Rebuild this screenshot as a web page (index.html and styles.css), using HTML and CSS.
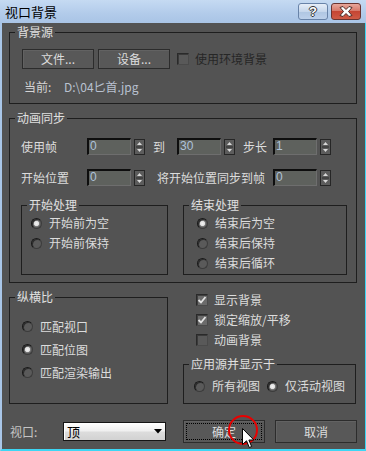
FILE: index.html
```html
<!DOCTYPE html>
<html lang="zh-CN">
<head>
<meta charset="utf-8">
<title>视口背景</title>
<link rel="stylesheet" href="styles.css">
</head>
<body>
<div class="window">
  <div class="titlebar">
    <span class="title">视口背景</span>
    <div class="caption-btns">
      <span class="cap-btn help">?</span>
      <span class="cap-btn close">
        <svg width="14" height="11" viewBox="0 0 14 11"><path d="M1 1.5 L4 0.5 L7 3.5 L10 0.5 L13 1.5 L9.5 5.5 L13 9.5 L10 10.5 L7 7.5 L4 10.5 L1 9.5 L4.5 5.5 Z" fill="#fff" stroke="#4a2a26" stroke-width="1" stroke-linejoin="round"/></svg>
      </span>
    </div>
  </div>
  <div class="frame">
    <div class="client">
      <fieldset class="group g-source">
        <legend>背景源</legend>
        <div class="gbody source-body">
          <div class="src-row">
            <button class="btn src-btn">文件...</button>
            <button class="btn src-btn">设备...</button>
            <span class="check disabled"><span class="box"></span><span>使用环境背景</span></span>
          </div>
          <div class="current-row"><span class="cur-label">当前:</span><span class="cur-path">D:\04匕首.jpg</span></div>
        </div>
      </fieldset>

      <fieldset class="group g-anim">
        <legend>动画同步</legend>
        <div class="gbody anim-body">
          <div class="frow">
            <span class="flabel">使用帧</span>
            <span class="spinner"><span class="field">0</span><span class="arrows"><svg width="11" height="16" viewBox="0 0 11 16"><path d="M5.5 3 L8 6 L3 6 Z" fill="#d8d8d8"/><line x1="2" y1="8" x2="9" y2="8" stroke="#2a2a2a"/><path d="M3 10 L8 10 L5.5 13 Z" fill="#d8d8d8"/></svg></span></span>
            <span class="mid-label to">到</span>
            <span class="spinner"><span class="field">30</span><span class="arrows"><svg width="11" height="16" viewBox="0 0 11 16"><path d="M5.5 3 L8 6 L3 6 Z" fill="#d8d8d8"/><line x1="2" y1="8" x2="9" y2="8" stroke="#2a2a2a"/><path d="M3 10 L8 10 L5.5 13 Z" fill="#d8d8d8"/></svg></span></span>
            <span class="mid-label step">步长</span>
            <span class="spinner"><span class="field">1</span><span class="arrows"><svg width="11" height="16" viewBox="0 0 11 16"><path d="M5.5 3 L8 6 L3 6 Z" fill="#d8d8d8"/><line x1="2" y1="8" x2="9" y2="8" stroke="#2a2a2a"/><path d="M3 10 L8 10 L5.5 13 Z" fill="#d8d8d8"/></svg></span></span>
          </div>
          <div class="frow second">
            <span class="flabel">开始位置</span>
            <span class="spinner"><span class="field">0</span><span class="arrows"><svg width="11" height="16" viewBox="0 0 11 16"><path d="M5.5 3 L8 6 L3 6 Z" fill="#d8d8d8"/><line x1="2" y1="8" x2="9" y2="8" stroke="#2a2a2a"/><path d="M3 10 L8 10 L5.5 13 Z" fill="#d8d8d8"/></svg></span></span>
            <span class="mid-label sync">将开始位置同步到帧</span>
            <span class="spinner"><span class="field">0</span><span class="arrows"><svg width="11" height="16" viewBox="0 0 11 16"><path d="M5.5 3 L8 6 L3 6 Z" fill="#d8d8d8"/><line x1="2" y1="8" x2="9" y2="8" stroke="#2a2a2a"/><path d="M3 10 L8 10 L5.5 13 Z" fill="#d8d8d8"/></svg></span></span>
          </div>
          <div class="subgroups">
            <fieldset class="group sub-start">
              <legend>开始处理</legend>
              <div class="gbody sub-body left">
                <span class="radio-row"><span class="radio on"></span>开始前为空</span>
                <span class="radio-row"><span class="radio"></span>开始前保持</span>
              </div>
            </fieldset>
            <fieldset class="group sub-end">
              <legend>结束处理</legend>
              <div class="gbody sub-body right">
                <span class="radio-row"><span class="radio on"></span>结束后为空</span>
                <span class="radio-row"><span class="radio"></span>结束后保持</span>
                <span class="radio-row"><span class="radio"></span>结束后循环</span>
              </div>
            </fieldset>
          </div>
        </div>
      </fieldset>

      <div class="lower">
        <fieldset class="group g-aspect">
          <legend>纵横比</legend>
          <div class="gbody aspect-body">
            <span class="radio-row tall"><span class="radio"></span>匹配视口</span>
            <span class="radio-row tall"><span class="radio on"></span>匹配位图</span>
            <span class="radio-row tall"><span class="radio"></span>匹配渲染输出</span>
          </div>
        </fieldset>
        <div class="right-col">
          <span class="check-row"><span class="box checked"><svg width="10" height="10" viewBox="0 0 10 10"><path d="M1.5 5 L4 7.5 L8.5 2" fill="none" stroke="#e4e4e4" stroke-width="1.8"/></svg></span>显示背景</span>
          <span class="check-row"><span class="box checked"><svg width="10" height="10" viewBox="0 0 10 10"><path d="M1.5 5 L4 7.5 L8.5 2" fill="none" stroke="#e4e4e4" stroke-width="1.8"/></svg></span>锁定缩放/平移</span>
          <span class="check-row"><span class="box"></span>动画背景</span>
          <fieldset class="group g-apply">
            <legend>应用源并显示于</legend>
            <div class="gbody apply-body">
              <span class="radio-row"><span class="radio"></span>所有视图</span>
              <span class="radio-row"><span class="radio on"></span>仅活动视图</span>
            </div>
          </fieldset>
        </div>
      </div>

      <div class="bottom-row">
        <span class="vp-label">视口:</span>
        <span class="dropdown"><span class="dd-text">顶</span><svg width="8" height="5" viewBox="0 0 8 5"><path d="M0 0 L8 0 L4 4.5 Z" fill="#000"/></svg></span>
        <button class="btn action ok"><span class="focus">确定</span></button>
        <button class="btn action cancel">取消</button>
      </div>
    </div>
  </div>
  <span class="click-ring"></span>
  <svg class="cursor" width="13" height="21" viewBox="0 0 13 21"><path d="M0.5 0.5 L0.5 16.5 L4.5 12.8 L7.3 19.5 L9.6 18.5 L6.9 12 L11.8 12 Z" fill="#fff" stroke="#000" stroke-width="1" stroke-linejoin="round"/></svg>
</div>
</body>
</html>
```

FILE: styles.css
```css
* { box-sizing: border-box; }
html, body { margin: 0; padding: 0; }
body {
  width: 366px;
  height: 451px;
  overflow: hidden;
  font-family: "Noto Sans CJK SC", "Noto Sans", sans-serif;
  font-size: 12px;
  color: #dcdcdc;
}
.window {
  position: relative;
  width: 366px;
  height: 451px;
  display: flex;
  flex-direction: column;
  background: #a9c6e8;
}
.titlebar {
  height: 23px;
  flex-shrink: 0;
  display: flex;
  align-items: flex-start;
  justify-content: space-between;
  padding: 0 5px 0 5px;
  background: linear-gradient(#c5daf2, #b2cbea 60%, #a9c4e5);
}
.title {
  margin-top: 3px;
  font-size: 13px;
  line-height: 17px;
  color: #000;
}
.caption-btns { display: flex; gap: 3px; margin-top: 3px; }
.cap-btn {
  width: 30px;
  height: 17px;
  border-radius: 3px;
  display: flex;
  align-items: center;
  justify-content: center;
}
.help {
  border: 1px solid #6883a8;
  background: linear-gradient(#e6eef8, #c6d7ec 50%, #afc6e2 51%, #bcd0ea);
  font-family: "Liberation Sans", sans-serif;
  font-weight: bold;
  font-size: 13px;
  line-height: 15px;
  color: #fff;
  text-shadow: -1px 0 #333, 1px 0 #333, 0 -1px #333, 0 1px #333;
}
.close {
  border: 1px solid #6a3430;
  background: linear-gradient(#e8a79b, #d7796a 45%, #c54533 50%, #cf5a45);
}
.frame {
  flex: 1;
  display: flex;
  border-left: 2px solid #a9c6e8;
  border-right: 2px solid #3dd6f4;
  border-bottom: 2px solid #3dd6f4;
}
.client {
  flex: 1;
  background: #535353;
  padding: 2px 8px 0 7px;
  display: flex;
  flex-direction: column;
}

/* group boxes */
.group {
  margin: 0;
  padding: 0;
  min-width: 0;
  border: 1px solid #1e1e1e;
}
.group > legend {
  margin-left: 5px;
  padding: 0 2px;
  font-size: 12px;
  line-height: 14px;
  color: #e0e0e0;
}
.gbody { display: flex; flex-direction: column; }

.source-body { padding: 10px 0 9px 12px; }
.src-row { display: flex; align-items: center; height: 20px; }
.btn {
  font-family: "Noto Sans CJK SC", sans-serif;
  font-size: 12px;
  color: #dcdcdc;
  background: #585858;
  border: 1px solid #2c2c2c;
  box-shadow: inset 1px 1px 0 #626262;
  padding: 0;
  margin: 0;
  line-height: 16px;
}
.src-btn { width: 72px; height: 20px; margin-right: 4px; }
.check { display: inline-flex; align-items: center; gap: 6px; margin-left: 3px; line-height: 14px; }
.check.disabled { color: #262626; }
.box {
  width: 12px;
  height: 12px;
  flex-shrink: 0;
  border: 1px solid #2a2a2a;
  border-right-color: #4a4a4a;
  border-bottom-color: #4a4a4a;
  background: #595959;
  box-shadow: inset 1px 1px 0 #3a3a3a;
  display: flex;
  align-items: center;
  justify-content: center;
}
.box.checked { background: #6b6b6b; box-shadow: inset 1px 1px 0 #404040; }
.current-row { margin-top: 11px; line-height: 14px; display: flex; }
.cur-label { width: 42px; padding-left: 2px; color: #d4d4d4; }
.cur-path { color: #b9c1d0; }

.g-anim { margin-top: 7px; }
.anim-body { padding: 13px 8px 7px 11px; }
.frow { display: flex; align-items: center; height: 17px; }
.frow.second { margin-top: 14px; }
.flabel { width: 66px; flex-shrink: 0; line-height: 14px; }
.mid-label { flex-shrink: 0; line-height: 14px; }
.to { width: 32px; padding-left: 8px; }
.step { width: 38px; padding-left: 8px; }
.sync { width: 128px; padding-left: 12px; }
.spinner { display: flex; align-items: center; gap: 3px; width: 58px; flex-shrink: 0; }
.field {
  width: 44px;
  height: 17px;
  background: #5e615d;
  border: 1px solid #0e0e0e;
  border-top-width: 2px;
  border-left-width: 2px;
  border-right-color: #6e6e6e;
  border-bottom-color: #6e6e6e;
  font-family: "Liberation Sans", sans-serif;
  font-size: 12px;
  line-height: 13px;
  color: #aec3da;
  padding-left: 1px;
}
.arrows {
  width: 11px;
  height: 16px;
  border: 1px solid #262626;
  background: #5c5c5c;
  display: flex;
  overflow: hidden;
}
.arrows svg { margin: -1px; }

.subgroups { display: flex; gap: 15px; margin-top: 12px; }
.sub-start { width: 147px; }
.sub-end { width: 164px; }
.sub-body { padding-top: 1px; padding-bottom: 1px; }
.sub-body.left { padding-left: 9px; }
.sub-body.right { padding-left: 13px; }
.radio-row {
  display: flex;
  align-items: center;
  gap: 7px;
  height: 20px;
  line-height: 14px;
}
.radio-row.tall { height: 23px; }
.radio {
  width: 11px;
  height: 11px;
  flex-shrink: 0;
  border-radius: 50%;
  background: #5a5a5a;
  border: 1px solid #1a1a1a;
  border-right-color: #3c3c3c;
  border-bottom-color: #3c3c3c;
  box-shadow: inset 1px 1px 0 #2e2e2e;
}
.radio.on {
  background: radial-gradient(circle, #f4f4f4 0, #e0e0e0 2.2px, #7a7a7a 3px, #5a5a5a 4px);
}

.lower { display: flex; gap: 15px; margin-top: 7px; align-items: flex-start; }
.g-aspect { width: 159px; flex-shrink: 0; }
.aspect-body { padding: 11px 0 19px 12px; }
.right-col { width: 173px; flex-shrink: 0; display: flex; flex-direction: column; }
.check-row {
  display: flex;
  align-items: center;
  gap: 6px;
  height: 20px;
  padding-left: 13px;
  line-height: 14px;
}
.g-apply { margin-top: 7px; }
.apply-body { flex-direction: row; padding: 5px 0 7px 10px; gap: 7px; }

.bottom-row { display: flex; align-items: center; height: 23px; margin-top: 16px; }
.vp-label { width: 54px; flex-shrink: 0; padding-left: 1px; color: #c4c4c4; line-height: 14px; }
.dropdown {
  width: 103px;
  height: 19px;
  flex-shrink: 0;
  border: 1px solid #151515;
  box-shadow: inset 1px 1px 0 #fff;
  background: linear-gradient(#ffffff, #f0f0f0 45%, #dcdcdc 55%, #d2d2d2);
  display: flex;
  align-items: center;
  justify-content: space-between;
  padding: 0 3px 0 3px;
  color: #000;
  font-size: 13px;
  line-height: 15px;
}
.action { width: 82px; height: 23px; flex-shrink: 0; }
.ok { margin-left: 17px; padding: 2px; }
.focus {
  display: flex;
  align-items: center;
  justify-content: center;
  width: 100%;
  height: 100%;
  border: 1px dotted #000;
}
.cancel { margin-left: 10px; }

/* overlays: click marker and mouse pointer */
.click-ring {
  position: absolute;
  left: 228px;
  top: 415px;
  width: 30px;
  height: 30px;
  border: 2.5px solid #e80000;
  border-radius: 50%;
}
.cursor {
  position: absolute;
  left: 242px;
  top: 428px;
}
```
